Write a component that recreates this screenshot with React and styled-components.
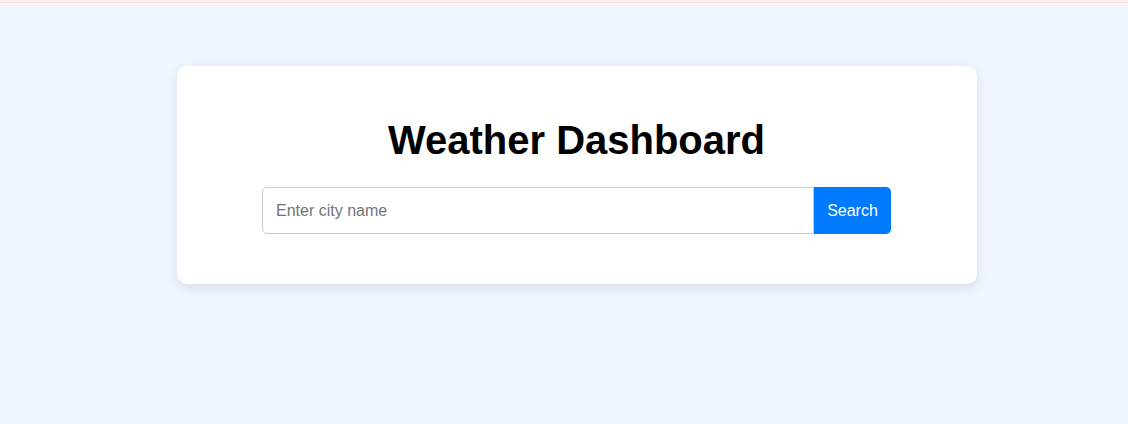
import React from 'react'
import styled, { createGlobalStyle } from 'styled-components'

const GlobalStyle = createGlobalStyle`
  html, body {
    margin: 0;
    padding: 0;
    background: #eff6ff;
    font-family: "Liberation Sans", Arial, sans-serif;
  }
`

const TopLine = styled.div`
  height: 2px;
  background: #fdf4f1;
  border-bottom: 1px solid #fbe1da;
`

const Page = styled.div`
  min-height: 421px;
  display: flex;
  justify-content: center;
  align-items: flex-start;
  padding: 63px 0 0 25px;
  box-sizing: border-box;
`

const Card = styled.div`
  width: 800px;
  box-sizing: border-box;
  padding: 20px;
  background: white;
  border-radius: 10px;
  box-shadow: 0 4px 12px rgba(0, 0, 0, 0.1);
  text-align: center;
`

const Title = styled.h1`
  font-size: 40px;
  line-height: 46px;
  font-weight: 700;
  margin: 31px 0 24px;
  color: #000;
`

const SearchForm = styled.form`
  display: flex;
  justify-content: center;
  margin-bottom: 30px;
`

const CityInput = styled.input`
  width: 552px;
  height: 47px;
  box-sizing: border-box;
  padding: 0 13px;
  font-size: 16px;
  font-family: inherit;
  border: 1px solid #ccc;
  border-radius: 5px 0 0 5px;
  outline: none;
  &::placeholder {
    color: #757575;
  }
`

const SearchButton = styled.button`
  width: 77px;
  height: 47px;
  padding: 0;
  font-size: 16px;
  font-family: inherit;
  color: white;
  background: #007bff;
  border: none;
  border-radius: 0 5px 5px 0;
  cursor: pointer;
  &:hover {
    background: #0069d9;
  }
`

const App = () => (
  <>
    <GlobalStyle />
    <TopLine />
    <Page>
      <Card>
        <Title>Weather Dashboard</Title>
        <SearchForm onSubmit={e => e.preventDefault()}>
          <CityInput type="text" placeholder="Enter city name" autoFocus />
          <SearchButton type="submit">Search</SearchButton>
        </SearchForm>
      </Card>
    </Page>
  </>
)

export default App
